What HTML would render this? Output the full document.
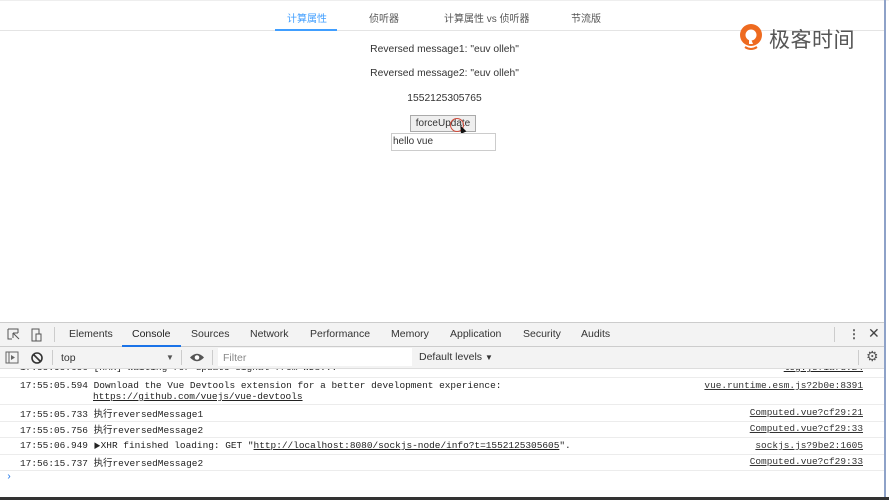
<!DOCTYPE html>
<html><head><meta charset="utf-8"><style>
*{margin:0;padding:0;box-sizing:border-box}
body{width:889px;height:500px;overflow:hidden;background:#fff;position:relative;font-family:"Liberation Sans","Noto Sans CJK SC",sans-serif;color:#333}
.abs{position:absolute}
.tab{position:absolute;top:10px;font-size:10px;color:#555;white-space:nowrap}
.c{position:absolute;left:0;width:889px;text-align:center;font-size:10.3px;color:#333}
.mono{font-family:"Liberation Mono","Noto Sans CJK SC",monospace;font-size:9.45px;color:#222}
.row{position:absolute;left:0;width:884px;border-bottom:1px solid #ececec}
.ts{position:absolute;left:20px}
.src{position:absolute;right:21px;text-decoration:underline;color:#333}
.dt{font-size:10.5px;color:#333;position:absolute;top:328px}
</style></head><body>
<div class="abs" style="left:0;top:0;width:889px;height:1px;background:#eee"></div>
<div class="abs" style="left:0;top:30px;width:884px;height:1px;background:#e4e4e4"></div>
<div class="abs" style="left:275px;top:29px;width:62px;height:2px;background:#409eff"></div>
<div class="tab" style="left:287px;color:#409eff">计算属性</div>
<div class="tab" style="left:369px">侦听器</div>
<div class="tab" style="left:444px">计算属性 vs 侦听器</div>
<div class="tab" style="left:571px">节流版</div>

<div class="abs" style="left:737px;top:22px;width:30px;height:30px">
<svg width="30" height="30" viewBox="0 0 30 30"><circle cx="14" cy="13" r="11" fill="#ee6a1f"/><circle cx="14" cy="13" r="5.5" fill="#fff"/><path d="M12 12 L12 22 L16 22 Z" fill="#fff"/><path d="M8 25 Q14 29 20 25" stroke="#ee6a1f" stroke-width="2" fill="none"/></svg></div>
<div class="abs" style="left:769px;top:24px;font-size:21px;color:#555;letter-spacing:0.5px">极客时间</div>
<div class="abs" style="left:884px;top:0;width:2px;height:500px;background:#8ea2c8"></div>

<div class="c" style="top:44px">Reversed message1: "euv olleh"</div>
<div class="c" style="top:68px">Reversed message2: "euv olleh"</div>
<div class="c" style="top:93px">1552125305765</div>
<div class="abs" style="left:410px;top:115px;width:66px;height:17px;background:#efefef;border:1px solid #aaa;font-size:10px;text-align:center;line-height:15px">forceUpdate</div>
<div class="abs" style="left:450px;top:118px;width:14px;height:14px;border:1.5px solid #d04a3a;border-radius:50%"></div>
<div class="abs" style="left:459px;top:125px;width:0;height:0;border-left:3px solid transparent;border-right:3px solid transparent;border-bottom:8px solid #111;transform:rotate(-25deg)"></div>
<div class="abs" style="left:391px;top:133px;width:105px;height:18px;border:1px solid #ccc;font-size:10px;line-height:16px;padding-left:1px">hello vue</div>

<!-- devtools -->
<div class="abs" style="left:0;top:322px;width:884px;height:1px;background:#ccc"></div>
<div class="abs" style="left:0;top:323px;width:884px;height:24px;background:#f3f3f3;border-bottom:1px solid #ccc"></div>
<div class="abs" style="left:0;top:347px;width:884px;height:22px;background:#f3f3f3;border-bottom:1px solid #ddd"></div>
<svg class="abs" style="left:6px;top:327px" width="40" height="16"><path d="M2 2h10v4M2 2v10h4" stroke="#555" fill="none"/><path d="M7 6l6 6M7 6v5M7 6h5" stroke="#555" fill="none"/><rect x="26" y="2" width="7" height="12" stroke="#555" fill="none"/><rect x="30" y="7" width="5" height="7" stroke="#555" fill="#f3f3f3"/></svg>
<div class="abs" style="left:54px;top:327px;width:1px;height:15px;background:#ccc"></div>
<div class="dt" style="left:69px">Elements</div>
<div class="dt" style="left:132px;color:#222">Console</div>
<div class="abs" style="left:122px;top:345px;width:59px;height:2px;background:#1a73e8"></div>
<div class="dt" style="left:191px">Sources</div>
<div class="dt" style="left:250px">Network</div>
<div class="dt" style="left:310px">Performance</div>
<div class="dt" style="left:391px">Memory</div>
<div class="dt" style="left:450px">Application</div>
<div class="dt" style="left:523px">Security</div>
<div class="dt" style="left:581px">Audits</div>
<div class="abs" style="left:834px;top:327px;width:1px;height:15px;background:#ccc"></div>
<div class="abs" style="left:848px;top:327px;font-size:12px;color:#555;font-weight:bold">⋮</div>
<div class="abs" style="left:868px;top:325px;font-size:14px;color:#444">✕</div>

<svg class="abs" style="left:5px;top:351px" width="40" height="14"><rect x="1" y="1" width="12" height="11" stroke="#666" fill="none"/><path d="M4 1v11" stroke="#666"/><path d="M6 4l4 2.5-4 2.5z" fill="#666"/><circle cx="32" cy="7" r="5" stroke="#333" stroke-width="1.6" fill="none"/><path d="M28.5 3.5l7 7" stroke="#333" stroke-width="1.6"/></svg>
<div class="abs" style="left:52px;top:350px;width:1px;height:15px;background:#ccc"></div>
<div class="abs" style="left:61px;top:352px;font-size:10.5px;color:#333">top</div>
<div class="abs" style="left:166px;top:353px;font-size:8px;color:#555">▼</div>
<div class="abs" style="left:181px;top:350px;width:1px;height:15px;background:#ccc"></div>
<svg class="abs" style="left:189px;top:351px" width="16" height="13"><path d="M1 6.5Q8 -1 15 6.5Q8 14 1 6.5z" fill="#555"/><circle cx="8" cy="6.5" r="2.3" fill="#fff"/></svg>
<div class="abs" style="left:212px;top:350px;width:1px;height:15px;background:#ccc"></div>
<div class="abs" style="left:218px;top:348px;width:194px;height:18px;background:#fff"></div>
<div class="abs" style="left:223px;top:352px;font-size:10.5px;color:#888">Filter</div>
<div class="abs" style="left:419px;top:351px;font-size:10.5px;color:#333">Default levels <span style="font-size:8px">▼</span></div>
<div class="abs" style="left:858px;top:350px;width:1px;height:15px;background:#ccc"></div>
<div class="abs" style="left:866px;top:348px;font-size:14px;color:#555">⚙</div>

<div class="mono">
<div class="row" style="top:369px;height:9px;overflow:hidden"><div style="position:absolute;top:-7px;left:20px">17:55:05.656 [HMR] Waiting for update signal from WDS...</div><div style="position:absolute;top:-7px;right:21px;text-decoration:underline">log.js?1afd:24</div></div>
<div class="row" style="top:378px;height:27px"><span class="ts" style="top:2px">17:55:05.594 Download the Vue Devtools extension for a better development experience:</span><span class="ts" style="top:13px;left:93px;text-decoration:underline">https://github.com/vuejs/vue-devtools</span><span class="src" style="top:2px">vue.runtime.esm.js?2b0e:8391</span></div>
<div class="row" style="top:405px;height:17px"><span class="ts" style="top:1px">17:55:05.733 执行reversedMessage1</span><span class="src" style="top:2px">Computed.vue?cf29:21</span></div>
<div class="row" style="top:422px;height:16px"><span class="ts" style="top:0px">17:55:05.756 执行reversedMessage2</span><span class="src" style="top:1px">Computed.vue?cf29:33</span></div>
<div class="row" style="top:438px;height:17px"><span class="ts" style="top:2px">17:55:06.949 <span style="font-size:7px">▶</span>XHR finished loading: GET "<u>http://localhost:8080/sockjs-node/info?t=1552125305605</u>".</span><span class="src" style="top:2px">sockjs.js?9be2:1605</span></div>
<div class="row" style="top:455px;height:16px"><span class="ts" style="top:0px">17:56:15.737 执行reversedMessage2</span><span class="src" style="top:1px">Computed.vue?cf29:33</span></div>
<div class="abs" style="left:6px;top:472px;color:#1a73e8;font-size:10px">›</div>
</div>
<div class="abs" style="left:0;top:497px;width:889px;height:3px;background:#333"></div>
</body></html>
